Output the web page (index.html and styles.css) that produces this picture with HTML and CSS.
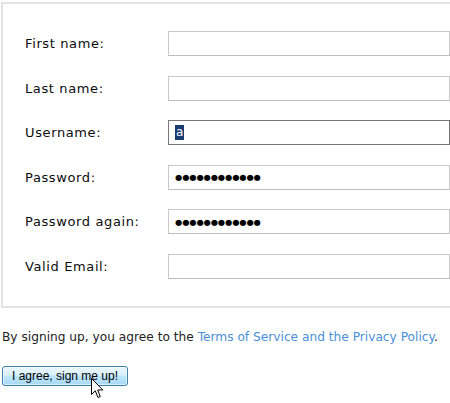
FILE: index.html
```html
<!DOCTYPE html>
<html>
<head>
<meta charset="utf-8">
<link rel="stylesheet" href="styles.css">
</head>
<body>
<div class="box">
  <div class="form">
    <label class="lbl">First name:</label>
    <div class="field"></div>
    <label class="lbl">Last name:</label>
    <div class="field"></div>
    <label class="lbl">Username:</label>
    <div class="field focus"><span class="sel">a</span></div>
    <label class="lbl">Password:</label>
    <div class="field"><span class="dots">●●●●●●●●●●●●</span></div>
    <label class="lbl">Password again:</label>
    <div class="field"><span class="dots">●●●●●●●●●●●●</span></div>
    <label class="lbl">Valid Email:</label>
    <div class="field"></div>
  </div>
</div>
<p class="terms">By signing up, you agree to the <a class="link" href="#">Terms of Service and the Privacy Policy</a>.</p>
<div class="actions">
  <button class="btn">I agree, sign me up!</button>
  <svg class="cursor" width="13" height="21" viewBox="0 0 13 21"><path d="M0.5 0.5 L0.5 16.5 L4.3 12.8 L7 19.5 L9.3 18.5 L6.7 12 L11.8 12 Z" fill="#fff" stroke="#000" stroke-width="1" stroke-linejoin="miter"/></svg>
</div>
</body>
</html>
```
FILE: styles.css
```css
html, body {
  margin: 0;
  padding: 0;
  background: #fff;
  overflow: hidden;
}
body {
  font-family: "DejaVu Sans", Verdana, sans-serif;
  font-size: 13px;
  color: #111;
  width: 450px;
  height: 403px;
}
.box {
  margin: 2px 0 0 1px;
  width: 449px;
  border: 2px solid #e2e2e2;
  border-right: none;
  padding: 27px 0 27px 0;
  box-sizing: border-box;
  overflow: hidden;
}
.form {
  display: grid;
  grid-template-columns: 143px 282px;
  row-gap: 19.6px;
  padding-left: 22px;
}
.lbl {
  display: flex;
  align-items: center;
  height: 25px;
  font-size: 13px;
  letter-spacing: 0.62px;
  color: #0c0c0c;
}
.field {
  height: 25px;
  box-sizing: border-box;
  border: 1px solid #c9c9c9;
  border-bottom-color: #bdbdbd;
  background: #fff;
  display: flex;
  align-items: center;
  padding-left: 6px;
}
.field.focus {
  border-color: #777;
}
.sel {
  background: #1a3c72;
  color: #fff;
  font-size: 12px;
  line-height: 15px;
  padding: 0 1px;
}
.dots {
  font-family: "DejaVu Sans", sans-serif;
  font-size: 8.2px;
  color: #000;
}
.terms {
  margin: 22px 0 0 2px;
  font-size: 12.2px;
  white-space: nowrap;
  color: #222;
}
.link {
  color: #4a8fd8;
  text-decoration: none;
}
.actions {
  position: relative;
  margin: 22px 0 0 2px;
}
.btn {
  font-family: "Liberation Sans", Arial, sans-serif;
  font-size: 12px;
  height: 20px;
  width: 126px;
  padding: 0;
  color: #000;
  border: 1px solid #3c7fb1;
  border-radius: 3px;
  background: linear-gradient(#eaf6fd 0%, #d9f0fc 45%, #bee6fd 50%, #a7d9f5 100%);
  box-shadow: inset 0 0 0 1px rgba(255,255,255,0.6);
}
.cursor {
  position: absolute;
  left: 89px;
  top: 12px;
}
```
